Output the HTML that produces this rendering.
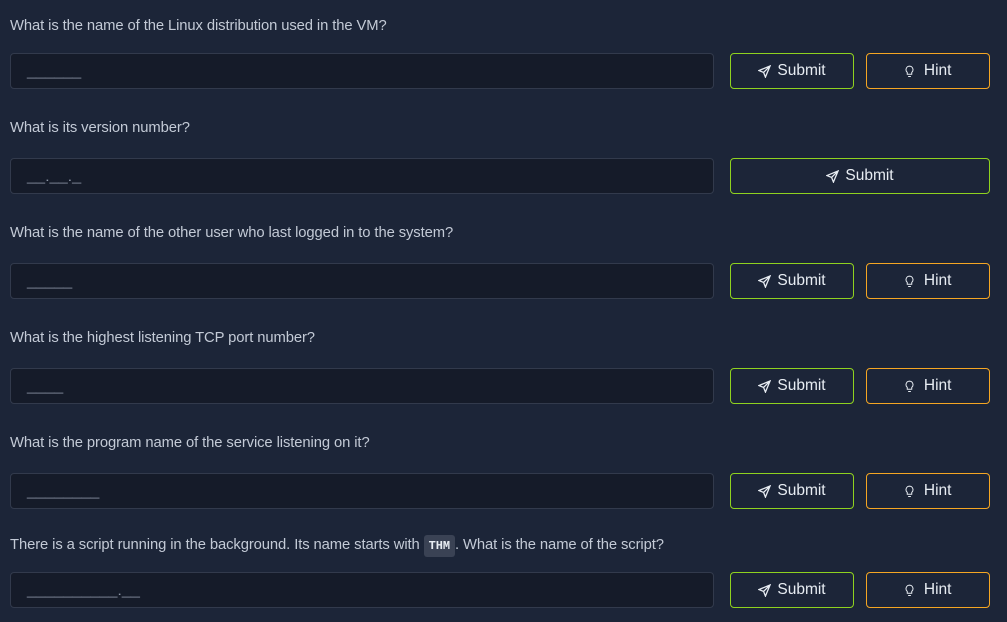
<!DOCTYPE html>
<html><head><style>
body{margin:0;width:1007px;height:622px;background:#1c2538;font-family:"Liberation Sans",sans-serif;overflow:hidden;position:relative;color:#c9d1dc}
.q{position:absolute;left:10px;font-size:14.8px;color:#c3cad6;line-height:20px;letter-spacing:-0.1px;margin-top:1px}
.in{position:absolute;left:10px;width:702px;height:34px;background:#151b29;border:1px solid #323a4c;border-radius:4px}
.in span{position:absolute;left:16px;top:10px;color:#8d96a6;font-size:13px;transform:scaleX(1.25);transform-origin:left}
.b{position:absolute;height:34px;border-radius:4px;box-sizing:content-box;color:#e8edf3;font-size:15.5px;display:flex;align-items:center;justify-content:center;gap:6px;background:#1c2538}
.s{left:730px;width:122px;border:1px solid #8fd21f}
.h{left:866px;width:122px;border:1px solid #f5a623}
.s.w{width:258px}
code{background:#3a4254;color:#e8edf3;font-family:"Liberation Mono",monospace;font-size:12px;font-weight:bold;padding:4px 5px;border-radius:3px}
svg{display:block}
</style></head><body>
<div class="q" style="top:15px">What is the name of the Linux distribution used in the VM?</div>
<div class="in" style="top:53px"><span>______</span></div>
<div class="b s" style="top:53px"><svg width="13" height="13" viewBox="0 0 14 14" fill="none" stroke="#e8edf3" stroke-width="1.4"><path d="M13 1L1 6l5 2 2 5z M13 1L6 8"/></svg>Submit</div>
<div class="b h" style="top:53px"><svg width="9" height="13" viewBox="0 0 10 14" fill="none" stroke="#e8edf3" stroke-width="1.1"><path d="M5 1a4 4 0 0 0-2.5 7v2h5V8A4 4 0 0 0 5 1zM3.5 12.5h3"/></svg>&nbsp;Hint</div>

<div class="q" style="top:117px">What is its version number?</div>
<div class="in" style="top:158px"><span>__.__._</span></div>
<div class="b s w" style="top:158px"><svg width="13" height="13" viewBox="0 0 14 14" fill="none" stroke="#e8edf3" stroke-width="1.4"><path d="M13 1L1 6l5 2 2 5z M13 1L6 8"/></svg>Submit</div>

<div class="q" style="top:222px">What is the name of the other user who last logged in to the system?</div>
<div class="in" style="top:263px"><span>_____</span></div>
<div class="b s" style="top:263px"><svg width="13" height="13" viewBox="0 0 14 14" fill="none" stroke="#e8edf3" stroke-width="1.4"><path d="M13 1L1 6l5 2 2 5z M13 1L6 8"/></svg>Submit</div>
<div class="b h" style="top:263px"><svg width="9" height="13" viewBox="0 0 10 14" fill="none" stroke="#e8edf3" stroke-width="1.1"><path d="M5 1a4 4 0 0 0-2.5 7v2h5V8A4 4 0 0 0 5 1zM3.5 12.5h3"/></svg>&nbsp;Hint</div>

<div class="q" style="top:327px">What is the highest listening TCP port number?</div>
<div class="in" style="top:368px"><span>____</span></div>
<div class="b s" style="top:368px"><svg width="13" height="13" viewBox="0 0 14 14" fill="none" stroke="#e8edf3" stroke-width="1.4"><path d="M13 1L1 6l5 2 2 5z M13 1L6 8"/></svg>Submit</div>
<div class="b h" style="top:368px"><svg width="9" height="13" viewBox="0 0 10 14" fill="none" stroke="#e8edf3" stroke-width="1.1"><path d="M5 1a4 4 0 0 0-2.5 7v2h5V8A4 4 0 0 0 5 1zM3.5 12.5h3"/></svg>&nbsp;Hint</div>

<div class="q" style="top:432px">What is the program name of the service listening on it?</div>
<div class="in" style="top:473px"><span>________</span></div>
<div class="b s" style="top:473px"><svg width="13" height="13" viewBox="0 0 14 14" fill="none" stroke="#e8edf3" stroke-width="1.4"><path d="M13 1L1 6l5 2 2 5z M13 1L6 8"/></svg>Submit</div>
<div class="b h" style="top:473px"><svg width="9" height="13" viewBox="0 0 10 14" fill="none" stroke="#e8edf3" stroke-width="1.1"><path d="M5 1a4 4 0 0 0-2.5 7v2h5V8A4 4 0 0 0 5 1zM3.5 12.5h3"/></svg>&nbsp;Hint</div>

<div class="q" style="top:534px">There is a script running in the background. Its name starts with <code>THM</code>. What is the name of the script?</div>
<div class="in" style="top:572px"><span>__________.__</span></div>
<div class="b s" style="top:572px"><svg width="13" height="13" viewBox="0 0 14 14" fill="none" stroke="#e8edf3" stroke-width="1.4"><path d="M13 1L1 6l5 2 2 5z M13 1L6 8"/></svg>Submit</div>
<div class="b h" style="top:572px"><svg width="9" height="13" viewBox="0 0 10 14" fill="none" stroke="#e8edf3" stroke-width="1.1"><path d="M5 1a4 4 0 0 0-2.5 7v2h5V8A4 4 0 0 0 5 1zM3.5 12.5h3"/></svg>&nbsp;Hint</div>
</body></html>
